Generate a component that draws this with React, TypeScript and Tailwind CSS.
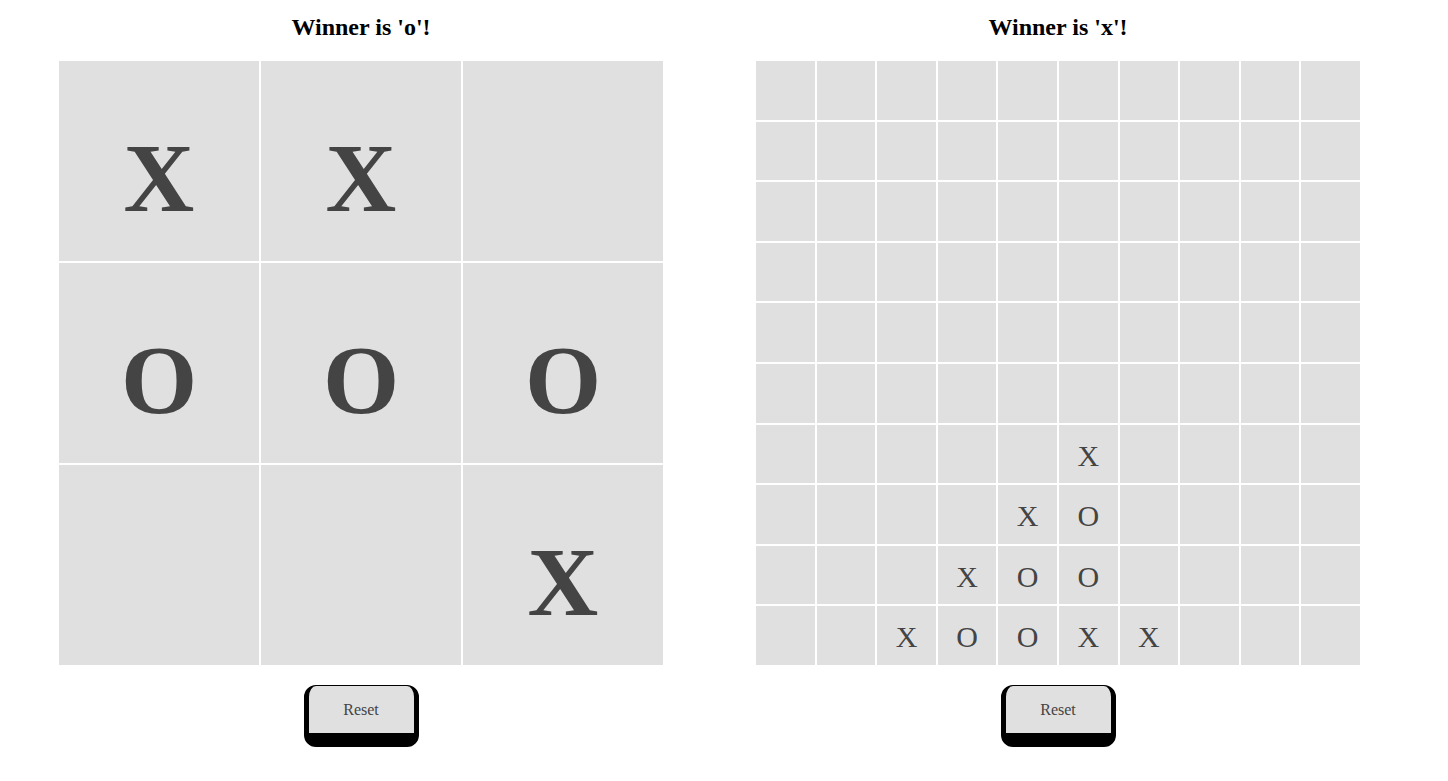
import React from "react";

const big: string[][] = [
  ["X", "X", ""],
  ["O", "O", "O"],
  ["", "", "X"],
];

const smallRows: Record<number, Record<number, string>> = {
  6: { 5: "X" },
  7: { 4: "X", 5: "O" },
  8: { 3: "X", 4: "O", 5: "O" },
  9: { 2: "X", 3: "O", 4: "O", 5: "X", 6: "X" },
};

function ResetButton() {
  return (
    <div className="flex justify-center mt-[20px]">
      <button
        className="w-[115px] h-[62px] box-border bg-[#e0e0e0] border-black border-t-[1px] border-x-[5px] border-b-[14px] rounded-[12px] flex items-center justify-center text-[16px] leading-[18px] text-[#444]"
        style={{ fontFamily: '"Liberation Serif", "Times New Roman", serif' }}
      >
        Reset
      </button>
    </div>
  );
}

function Title({ text }: { text: string }) {
  return (
    <h2 className="text-center text-[24px] font-bold leading-[27px] text-black pt-[14px] mb-[20px]">
      {text}
    </h2>
  );
}

export default function App() {
  return (
    <div
      className="w-[1448px] min-h-[781px] bg-white flex items-start pl-[59px] gap-[93px]"
      style={{ fontFamily: '"Liberation Serif", "Times New Roman", serif' }}
    >
      <div className="w-[604px] flex flex-col">
        <Title text="Winner is 'o'!" />
        <div className="grid grid-cols-3 grid-rows-3 gap-[2px] w-[604px] h-[604px]">
          {big.flat().map((v, i) => (
            <div
              key={i}
              className="bg-[#e0e0e0] text-center text-[98px] font-bold leading-[100px] text-[#444] pt-[67px]"
            >
              {v}
            </div>
          ))}
        </div>
        <ResetButton />
      </div>
      <div className="w-[604px] flex flex-col">
        <Title text="Winner is 'x'!" />
        <div className="grid grid-cols-10 grid-rows-10 gap-[2px] w-[604px] h-[604px]">
          {Array.from({ length: 100 }).map((_, i) => {
            const r = Math.floor(i / 10);
            const c = i % 10;
            const v = smallRows[r]?.[c] ?? "";
            return (
              <div
                key={i}
                className="bg-[#e0e0e0] text-center text-[30px] leading-[30px] text-[#444] pt-[16px]"
              >
                {v}
              </div>
            );
          })}
        </div>
        <ResetButton />
      </div>
    </div>
  );
}
